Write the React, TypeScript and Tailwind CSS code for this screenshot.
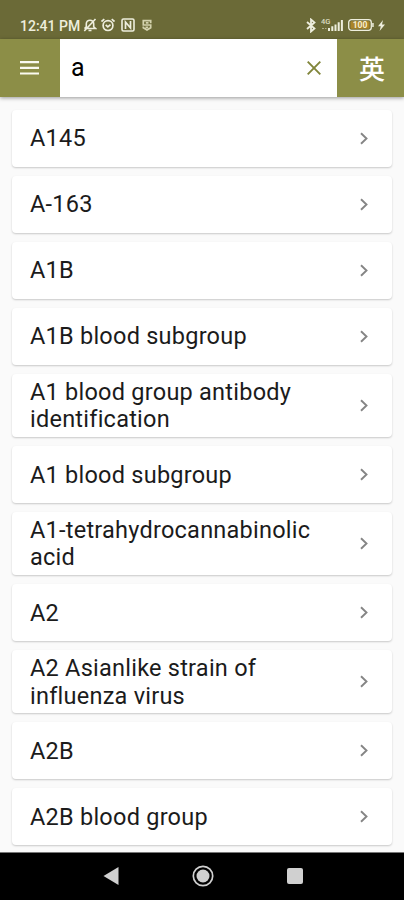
import { useState } from "react";
import { clsx } from "clsx";

const entries = [
  { title: "A145" },
  { title: "A-163" },
  { title: "A1B" },
  { title: "A1B blood subgroup" },
  { title: "A1 blood group antibody identification", tall: true },
  { title: "A1 blood subgroup" },
  { title: "A1-tetrahydrocannabinolic acid", tall: true },
  { title: "A2" },
  { title: "A2 Asianlike strain of influenza virus", tall: true },
  { title: "A2B" },
  { title: "A2B blood group" },
];

function StatusBar() {
  return (
    <div className="flex h-[39px] shrink-0 items-end justify-between bg-[#6b6a37] pr-[19px] pb-[6px] pl-[20px] text-[#eeeedd]">
      <div className="flex h-4 items-center">
        <span className="w-[62px] pt-px text-[14px] leading-4 font-medium whitespace-nowrap">12:41 PM</span>
        {/* muted bell */}
        <svg className="ml-px h-[14px] w-[14px]" viewBox="0 0 14 14" fill="none" stroke="currentColor" strokeWidth="1.600">
          <path d="M1.500 10.500h11l-1.800-1.800V5.800C10.700 3.500 9 2.300 7 2.300S3.300 3.500 3.300 5.800v2.900L1.500 10.500M5.500 12.500h3M12.500 1 1.300 13" />
        </svg>
        {/* alarm */}
        <svg className="ml-[4px] h-[14px] w-[14px]" viewBox="0 0 14 14" fill="none" stroke="currentColor" strokeWidth="1.700">
          <circle cx="7" cy="7.600" r="4.900" />
          <path d="M.5 3.500 3.300 1.200M13.500 3.500l-2.800-2.300M4.700 6.900 6.800 8.900l2.700-2.200" />
        </svg>
        {/* nfc */}
        <svg className="ml-[6px] h-[14px] w-[14px]" viewBox="0 0 14 14" fill="none" stroke="currentColor" strokeWidth="1.600">
          <rect x="1" y="1" width="12" height="12" rx="1.500" />
          <path d="M4.500 11V4l5 6V3" strokeWidth="1.700" />
        </svg>
        {/* S badge */}
        <svg className="ml-[7px] h-3 w-[10px] text-[#d3d2ad]" viewBox="0 0 10 12" fill="none" stroke="currentColor" strokeWidth="1.700">
          <path d="M8.700 4.200V1.700H1.300V6h7.400v2.700L5 11 1.300 8.700V7.500M3.800 3.800h2.700M3.500 8.300h2.700" />
        </svg>
      </div>

      <div className="flex h-4 items-center">
        <svg className="h-[15px] w-[10px]" viewBox="0 0 10 15" fill="none" stroke="currentColor" strokeWidth="1.800">
          <path d="m1 4 7.500 6.500L5 13.500v-12l3.500 3L1 11" />
        </svg>
        <svg className="ml-[5px] h-[14px] w-[22px]" viewBox="0 0 22 14" fill="currentColor">
          <text x="0" y="6" fontSize="7.500" fontWeight="500" opacity=".85">4G</text>
          <path d="M1 10h2v1H1zM4 10h1.500v1H4z" opacity=".5" />
          <path d="M7 10h2v3H7zM10.300 8.300h2V13h-2zM13.500 6.500h2V13h-2zM16.700 4.300h2V13h-2zM19.900 2h2v11h-2z" />
        </svg>
        <svg className="ml-[5px] h-3 w-[26px]" viewBox="0 0 26 12">
          <rect x=".7" y=".7" width="22.600" height="10.600" rx="2.800" fill="none" stroke="currentColor" strokeWidth="1.300" />
          <rect x="2.500" y="2.300" width="19" height="7.400" rx="1" fill="#aa8428" />
          <path d="M24.200 4h1.500v4h-1.500z" fill="currentColor" />
          <text x="12" y="9" textAnchor="middle" fontSize="8.500" fontWeight="700" fill="#f5eed0">100</text>
        </svg>
        <svg className="ml-[4px] h-[11px] w-[7px]" viewBox="0 0 7 11" fill="currentColor">
          <path d="M5 0 0 6.200h2.800L1.600 11 7 4.500H4z" />
        </svg>
      </div>
    </div>
  );
}

function SearchHeader() {
  const [query, setQuery] = useState("a");

  return (
    <header className="relative z-10 flex h-[58px] shrink-0 bg-[#8c8e47] shadow-[0_1px_4px_rgba(0,0,0,0.4)]">
      <button className="flex w-[59px] items-center justify-center" aria-label="Menu">
        <svg className="h-[14px] w-[19px]" viewBox="0 0 19 14" fill="#fafaf0">
          <path d="M0 0h19v2.200H0zM0 5.700h19v2.200H0zM0 11.400h19v2.200H0z" />
        </svg>
      </button>
      <div className="ml-px flex w-[277px] items-center bg-white pr-4 pl-[11px]">
        <input
          className="min-w-0 flex-1 text-[25px] leading-7 text-black outline-none"
          value={query}
          onChange={(e) => setQuery(e.target.value)}
        />
        <button aria-label="Clear" onClick={() => setQuery("")}>
          <svg className="h-[14px] w-[14px]" viewBox="0 0 14 14" fill="none" stroke="#80853a" strokeWidth="1.900">
            <path d="m.7.7 12.600 12.600M13.300.7.7 13.300" />
          </svg>
        </button>
      </div>
      <button className="flex flex-1 items-center justify-center pl-[3px] font-['Noto_Sans_CJK_SC',sans-serif] text-[26px] leading-none font-medium text-white">
        英
      </button>
    </header>
  );
}

function EntryCard({ title, tall }: { title: string; tall?: boolean }) {
  return (
    <li
      className={clsx(
        "flex shrink-0 items-center justify-between rounded-[4px] bg-white pr-6 pl-[18px] shadow-[0_1px_2px_rgba(0,0,0,0.2)]",
        tall ? "h-[63.300px]" : "h-[57px]"
      )}
    >
      <span className="w-[300px] pt-[2px] text-[23.500px] leading-[27.500px] tracking-[0.240px] text-[#1b1b1b]">{title}</span>
      <svg className="h-[13px] w-2" viewBox="0 0 8 13" fill="none" stroke="#858585" strokeWidth="1.900">
        <path d="m1 1.300 5.500 5.200L1 11.700" />
      </svg>
    </li>
  );
}

function NavBar() {
  return (
    <nav className="flex h-12 shrink-0 items-center justify-center gap-[73px] border-t border-[#777] bg-black pb-px pl-px">
      <svg className="h-[18px] w-4" viewBox="0 0 16 18" fill="#d0d0d0">
        <path d="M15.500 0v18L.5 9z" />
      </svg>
      <svg className="h-[22px] w-[22px]" viewBox="0 0 22 22" fill="none">
        <circle cx="11" cy="11" r="9.700" stroke="#d0d0d0" strokeWidth="1.700" />
        <circle cx="11" cy="11" r="6.500" fill="#d0d0d0" />
      </svg>
      <div className="h-4 w-4 rounded-[2px] bg-[#d0d0d0]" />
    </nav>
  );
}

export default function App() {
  return (
    <div className="flex h-[900px] w-[404px] flex-col overflow-hidden bg-[#fafafa] font-[Roboto,sans-serif]">
      <StatusBar />
      <SearchHeader />
      <ul className="flex min-h-0 flex-1 flex-col gap-[9px] overflow-hidden px-3 pt-[12.500px]">
        {entries.map((entry) => (
          <EntryCard key={entry.title} {...entry} />
        ))}
      </ul>
      <NavBar />
    </div>
  );
}
